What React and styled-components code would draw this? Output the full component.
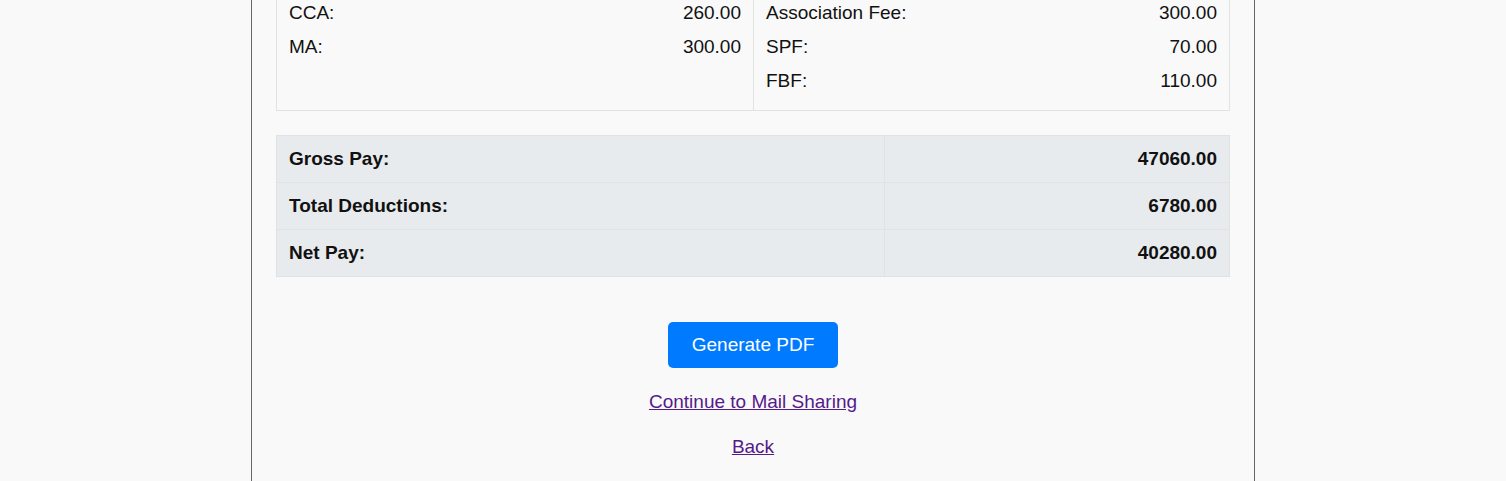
import React from "react";
import styled, { createGlobalStyle } from "styled-components";

const GlobalStyle = createGlobalStyle`
  * { box-sizing: border-box; }
  body {
    margin: 0;
    background: #f9f9f9;
    color: #111;
    font-family: Arial, "Liberation Sans", sans-serif;
    font-size: 19px;
    line-height: 22px;
  }
`;

const Slip = styled.main`
  max-width: 1004px;
  min-height: 100vh;
  margin: 0 auto;
  padding: 0 24px 24px;
  border: solid #666;
  border-width: 0 1px;
`;

const Breakdown = styled.section`
  display: grid;
  grid-template-columns: 1fr 1fr;
  border: 1px solid #e0e2e4;
  border-top: 0;
`;

const Column = styled.div`
  padding: 2px 12px 18px;

  & + & {
    border-left: 1px solid #e0e2e4;
  }
`;

const ItemTable = styled.table`
  width: 100%;
  border-collapse: collapse;

  th, td {
    padding: 0 0 12px;
    font-weight: 400;
    text-align: left;
  }
  tr:last-child > * { padding-bottom: 0; }
  td { text-align: right; }
`;

const SummaryTable = styled.table`
  width: 100%;
  margin-top: 24px;
  border-collapse: collapse;
  background: #e8ebee;

  th, td {
    padding: 12px;
    border: 1px solid #e0e2e4;
    font-weight: 700;
    text-align: left;
  }
  td { text-align: right; }
`;

const Actions = styled.nav`
  display: flex;
  flex-direction: column;
  align-items: center;
  gap: 23px;
  margin-top: 45px;
`;

const Button = styled.button`
  padding: 12px 24px;
  border: 0;
  border-radius: 5px;
  background: #007bff;
  color: #fff;
  font: inherit;
  cursor: pointer;
`;

const Link = styled.a`
  color: #551a8b;
`;

const earnings = [
  ["CCA:", "260.00"],
  ["MA:", "300.00"],
];

const deductions = [
  ["Association Fee:", "300.00"],
  ["SPF:", "70.00"],
  ["FBF:", "110.00"],
];

const totals = [
  ["Gross Pay:", "47060.00"],
  ["Total Deductions:", "6780.00"],
  ["Net Pay:", "40280.00"],
];

function Rows({ items }) {
  return (
    <tbody>
      {items.map(([label, amount]) => (
        <tr key={label}>
          <th scope="row">{label}</th>
          <td>{amount}</td>
        </tr>
      ))}
    </tbody>
  );
}

export default function App() {
  return (
    <>
      <GlobalStyle />
      <Slip>
        <Breakdown>
          <Column>
            <ItemTable><Rows items={earnings} /></ItemTable>
          </Column>
          <Column>
            <ItemTable><Rows items={deductions} /></ItemTable>
          </Column>
        </Breakdown>
        <SummaryTable><Rows items={totals} /></SummaryTable>
        <Actions>
          <Button type="button">Generate PDF</Button>
          <Link href="#mail">Continue to Mail Sharing</Link>
          <Link href="#back">Back</Link>
        </Actions>
      </Slip>
    </>
  );
}
